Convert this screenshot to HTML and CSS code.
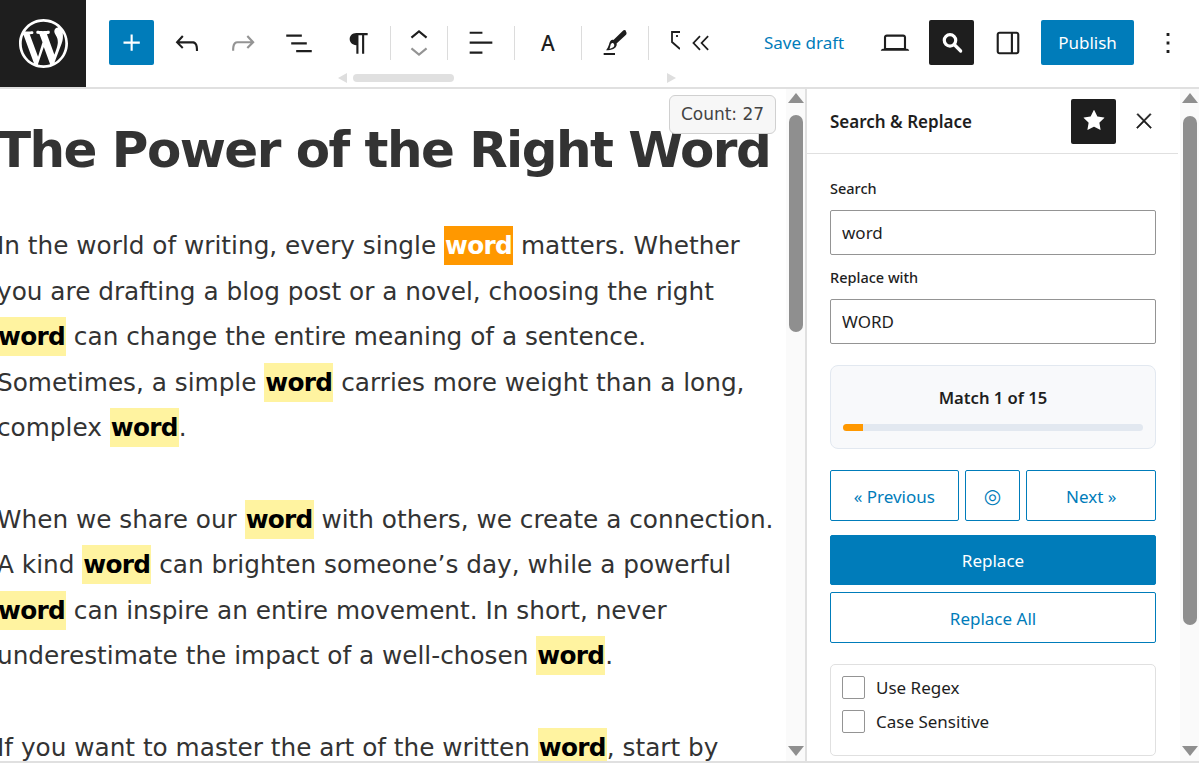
FILE: index.html
```html
<!DOCTYPE html>
<html lang="en">
<head>
    <meta charset="UTF-8" />
    <title>Search &amp; Replace</title>
    <link rel="stylesheet" href="styles.css">
</head>
<body>
    <header class="topbar">
        <a class="logo">
            <svg viewBox="0 0 20 20" width="49" height="49"><path fill="#fff" d="M20 10c0-5.51-4.49-10-10-10C4.48 0 0 4.49 0 10c0 5.52 4.48 10 10 10 5.51 0 10-4.48 10-10zM7.78 15.37L4.37 6.22c.55-.02 1.17-.08 1.17-.08.5-.06.44-1.13-.06-1.11 0 0-1.45.11-2.37.11-.18 0-.37 0-.58-.01C4.12 2.69 6.87 1.11 10 1.11c2.33 0 4.45.87 6.05 2.34-.68-.11-1.65.39-1.65 1.58 0 .74.45 1.36.9 2.1.35.61.55 1.36.55 2.46 0 1.49-1.4 5-1.4 5l-3.03-8.37c.54-.02.82-.17.82-.17.5-.05.44-1.25-.06-1.22 0 0-1.44.12-2.38.12-.87 0-2.33-.12-2.33-.12-.5-.03-.56 1.2-.06 1.22l.92.08 1.26 3.41zM17.41 10c.24-.64.74-1.87.43-4.25.7 1.29 1.05 2.71 1.05 4.25 0 3.29-1.73 6.24-4.4 7.78.97-2.59 1.94-5.2 2.92-7.78zM6.1 18.09C3.12 16.65 1.11 13.53 1.11 10c0-1.3.23-2.48.72-3.59C3.25 10.3 4.67 14.2 6.1 18.09zm4.03-6.63l2.58 6.98c-.86.29-1.76.45-2.71.45-.79 0-1.57-.11-2.29-.33.81-2.38 1.62-4.74 2.42-7.1z"/></svg>
        </a>

        <div class="tools-wrap">
            <div class="tools">
                <button class="tool tool-primary"><svg viewBox="0 0 24 24"><path d="M11 12.5V17.5H12.5V12.5H17.5V11H12.5V6H11V11H6V12.5H11Z"/></svg></button>
                <button class="tool tool-w tool-first"><svg viewBox="0 0 24 24"><path d="M18.3 11.7c-.6-.6-1.4-.9-2.3-.9H6.7l2.9-3.3-1.1-1-4.5 5L8.5 16l1-1-2.7-2.7H16c.5 0 .9.2 1.3.5 1 1 1 3.4 1 4.5v.3h1.5v-.2c0-1.5 0-4.3-1.5-5.7z"/></svg></button>
                <button class="tool tool-w tool-off"><svg viewBox="0 0 24 24"><path d="M15.6 6.5l-1.1 1 2.9 3.3H8c-.9 0-1.7.3-2.3.9-1.4 1.5-1.4 4.2-1.4 5.6v.2h1.5v-.3c0-1.1 0-3.5 1-4.5.3-.3.7-.5 1.3-.5h9.2L14.5 15l1.1 1.1 4.6-4.6-4.6-5z"/></svg></button>
                <button class="tool tool-w"><svg viewBox="0 0 24 24"><path d="M3 6h11v1.5H3V6Zm3.5 5.5h11V13h-11v-1.5ZM21 17H10v1.5h11V17Z"/></svg></button>
                <button class="tool tool-p"><svg viewBox="0 0 24 24"><path d="M18.500 4.500H10C6.900 4.500 5 6.600 5 9s1.900 4.600 5 4.600V20h1.600V6.100h2.700V20h1.600V6.100h2.600z"/></svg></button>
                <span class="sep"></span>
                <div class="tool-stack">
                    <svg viewBox="0 0 24 16"><path d="M6 11.500 12 6.500l6 5-1 1.200L12 8.600l-5 4.100z"/></svg>
                    <svg class="tool-dim" viewBox="0 0 24 16"><path d="M18 4.500 12 9.500l-6-5 1-1.200L12 7.400l5-4.100z"/></svg>
                </div>
                <span class="sep"></span>
                <button class="tool tool-s"><svg viewBox="0 0 24 24"><path d="M13 5.500H4V4h9v1.500Zm7 7H4V11h16v1.500Zm-7 7H4V18h9v1.500Z"/></svg></button>
                <span class="sep"></span>
                <button class="tool tool-s tool-letter">A</button>
                <span class="sep"></span>
                <button class="tool tool-s"><svg viewBox="0 0 24 24"><path d="M4 20.500h8V19H4zM19.700 3.300c-.6-.6-1.500-.6-2.100 0l-6.700 6.500c-.4-.1-.8 0-1.200.1-.6.2-1.300.9-1.700 2.200-.3 1.300-.9 2.800-1.500 3.700l-.8 1.300H7c1.900 0 3.700-.5 4.800-1.500.8-.7 1.300-1.500 1.400-2.400 0-.3 0-.6-.1-.8l6.700-6.300c.5-.6.500-1.600-.100-2.300zM11 14.900c-.7.600-1.700 1-2.900 1.100.4-.8.600-1.700.8-2.700.2-.8.500-1.100.9-1.200.4-.1.800 0 1.200.3.300.3.500.7.500 1.100 0 .5-.2 1-.5 1.400z"/></svg></button>
                <span class="sep"></span>
                <div class="tool-clip"><svg viewBox="0 0 9 24" width="9" height="24"><path fill="none" stroke="#1e1e1e" stroke-width="1.800" d="M9 3H1v10l8 7"/><circle cx="6" cy="7" r="1.100"/></svg></div>
                <button class="tool tool-c"><svg viewBox="0 0 24 24"><path d="M11.500 6 5.800 12l5.700 6 1-1-4.800-5 4.800-5zM18 6l-5.700 6 5.700 6 1-1-4.800-5L19 7z"/></svg></button>
            </div>
            <div class="hscroll">
                <span class="arrow arrow-l"></span>
                <span class="hthumb"></span>
                <span class="arrow arrow-r"></span>
            </div>
        </div>

        <div class="actions">
            <a class="save">Save draft</a>
            <button class="tool tool-view"><svg viewBox="0 0 24 24"><path d="M20.500 16h-.7V8c0-1.100-.9-2-2-2H6.200c-1.100 0-2 .9-2 2v8h-.7c-.8 0-1.500.7-1.500 1.500h20c0-.8-.7-1.500-1.500-1.500zM5.700 8c0-.3.2-.5.5-.5h11.600c.3 0 .5.2.5.5v7.600H5.700V8z"/></svg></button>
            <button class="tool tool-dark tool-find"><svg viewBox="0 0 24 24"><circle cx="10.500" cy="10" r="4.300" fill="none" stroke="#fff" stroke-width="2.400"/><path stroke="#fff" stroke-width="2.400" stroke-linecap="round" d="M14 13.500l4.500 4.500"/></svg></button>
            <button class="tool tool-view tool-panel"><svg viewBox="0 0 24 24"><path d="M18 4H6c-1.100 0-2 .9-2 2v12c0 1.100.9 2 2 2h12c1.100 0 2-.9 2-2V6c0-1.100-.9-2-2-2zm-4 14.500H6c-.3 0-.5-.2-.5-.5V6c0-.3.2-.5.5-.5h8v13zm4.500-.5c0 .3-.2.500-.5.500h-2.500v-13H18c.3 0 .5.2.5.500v12z"/></svg></button>
            <button class="publish">Publish</button>
            <button class="tool tool-more"><svg viewBox="0 0 24 24"><path d="M13 19h-2v-2h2v2zm0-6h-2v-2h2v2zm0-6h-2V5h2v2z"/></svg></button>
        </div>
    </header>

    <main class="layout">
        <section class="editor">
            <div class="count">Count: 27</div>
            <div class="doc">
                <h1>The Power of the Right Word</h1>
                <p>In the world of writing, every single <mark class="now">word</mark> matters. Whether you are drafting a blog post or a novel, choosing the right <mark>word</mark> can change the entire meaning of a sentence. Sometimes, a simple <mark>word</mark> carries more weight than a long, complex <mark>word</mark>.</p>
                <p>When we share our <mark>word</mark> with others, we create a connection. A kind <mark>word</mark> can brighten someone’s day, while a powerful <mark>word</mark> can inspire an entire movement. In short, never underestimate the impact of a well-chosen <mark>word</mark>.</p>
                <p>If you want to master the art of the written <mark>word</mark>, start by</p>
            </div>
            <div class="vscroll">
                <span class="arrow arrow-u"></span>
                <span class="thumb thumb-editor"></span>
                <span class="arrow arrow-d"></span>
            </div>
        </section>

        <aside class="sidebar">
            <div class="panel">
                <div class="panel-head">
                    <h2>Search &amp; Replace</h2>
                    <button class="tool tool-dark"><svg viewBox="0 0 24 24"><path fill="#fff" d="M11.776 4.454a.25.25 0 01.448 0l2.069 4.192a.25.25 0 00.188.137l4.626.672a.25.25 0 01.139.426l-3.348 3.263a.25.25 0 00-.072.222l.79 4.607a.25.25 0 01-.362.263l-4.138-2.175a.25.25 0 00-.232 0l-4.138 2.175a.25.25 0 01-.363-.263l.79-4.607a.25.25 0 00-.071-.222L4.754 9.881a.25.25 0 01.139-.426l4.626-.672a.25.25 0 00.188-.137l2.069-4.192z"/></svg></button>
                    <button class="tool tool-close"><svg viewBox="0 0 24 24"><path d="M13 11.800l6.100-6.300-1-1-6.100 6.200-6.100-6.200-1 1 6.100 6.300-6.500 6.700 1 1 6.500-6.600 6.500 6.600 1-1z"/></svg></button>
                </div>
                <div class="panel-body">
                    <label class="field-label">Search</label>
                    <input class="field" type="text" value="word" />
                    <label class="field-label field-label-2">Replace with</label>
                    <input class="field" type="text" value="WORD" />

                    <div class="match">
                        <div class="match-text">Match 1 of 15</div>
                        <div class="bar"><div class="bar-fill" style="width: 6.67%"></div></div>
                    </div>

                    <div class="nav">
                        <button class="btn btn-prev">« Previous</button>
                        <button class="btn btn-ring">◎</button>
                        <button class="btn btn-next">Next »</button>
                    </div>
                    <button class="btn btn-solid">Replace</button>
                    <button class="btn btn-all">Replace All</button>

                    <div class="options">
                        <label class="option"><input type="checkbox" /><span>Use Regex</span></label>
                        <label class="option"><input type="checkbox" /><span>Case Sensitive</span></label>
                    </div>
                </div>
            </div>
            <div class="vscroll">
                <span class="arrow arrow-u"></span>
                <span class="thumb thumb-side"></span>
                <span class="arrow arrow-d"></span>
            </div>
        </aside>
    </main>
</body>
</html>
```

FILE: styles.css
```css
:root {
    --azul: #007cba;
    --negro: #1e1e1e;
    --linea: #e0e0e0;
    --texto: #333333;
}

* {
    box-sizing: border-box;
}

body {
    margin: 0;
    height: 765px;
    overflow: hidden;
    background: white;
    color: var(--negro);
    font-family: "Noto Sans", sans-serif;
    font-size: 17px;
}

button {
    font-family: inherit;
    cursor: pointer;
}

/* top bar */
.topbar {
    display: flex;
    height: 89px;
    border-bottom: 2px solid var(--linea);
}

.logo {
    width: 86px;
    height: 87px;
    flex: none;
    display: flex;
    align-items: center;
    justify-content: center;
    background: var(--negro);
}

.tools-wrap {
    width: 626px;
    margin-left: 23px;
    flex: none;
    overflow: hidden;
}

.tools {
    display: flex;
    align-items: center;
    height: 65px;
    padding-top: 20px;
}

.tool {
    width: 45px;
    height: 45px;
    padding: 0;
    flex: none;
    display: flex;
    align-items: center;
    justify-content: center;
    border: none;
    border-radius: 2px;
    background: none;
    color: var(--negro);
}

.tool svg {
    width: 34px;
    height: 34px;
    fill: var(--negro);
}

.tool-w {
    width: 56px;
}

.tool-first {
    margin-left: 5px;
}

.tool-primary {
    background: var(--azul);
}

.tool-primary svg {
    fill: white;
}

.tool-off svg {
    fill: #949494;
}

.tool-p {
    width: 63px;
}

.tool-p svg {
    width: 32px;
    height: 32px;
}

.tool-s {
    width: 66px;
}

.tool-c {
    width: 30px;
    margin-left: 5px;
}

.tool-letter {
    font-size: 21px;
    font-weight: 500;
}

.tool-clip {
    width: 9px;
    height: 24px;
    margin: -4px 0 0 22px;
    flex: none;
}

.tool-stack {
    width: 56px;
    flex: none;
    display: flex;
    flex-direction: column;
    align-items: center;
}

.tool-stack svg {
    width: 34px;
    height: 22px;
    fill: var(--negro);
}

.tool-stack .tool-dim {
    fill: #949494;
}

.sep {
    width: 1px;
    height: 34px;
    flex: none;
    background: #dcdcdc;
}

.hscroll {
    display: flex;
    align-items: center;
    height: 14px;
    margin-top: 6px;
    padding-left: 229px;
}

.hthumb {
    width: 101px;
    height: 8px;
    margin: 0 213px 0 6px;
    border-radius: 4px;
    background: #e0e0e0;
}

.arrow {
    width: 0;
    height: 0;
    flex: none;
    border-style: solid;
    border-color: transparent;
}

.arrow-l {
    border-width: 5px 9px 5px 0;
    border-right-color: #dedede;
}

.arrow-r {
    border-width: 5px 0 5px 9px;
    border-left-color: #dedede;
}

.arrow-u {
    border-width: 0 8px 10px;
    border-bottom-color: #8f8f8f;
}

.arrow-d {
    border-width: 10px 8px 0;
    border-top-color: #8f8f8f;
}

.actions {
    display: flex;
    align-items: center;
    height: 45px;
    margin-top: 20px;
    margin-left: 29px;
}

.save {
    width: 81px;
    color: var(--azul);
    white-space: nowrap;
}

.tool-view {
    width: 56px;
    margin-left: 22px;
    margin-right: 6px;
}

.tool-panel {
    width: 67px;
    margin: 0;
}

.tool-find svg {
    width: 32px;
    height: 32px;
}

.tool-dark {
    background: var(--negro);
}

.publish {
    width: 93px;
    height: 45px;
    border: none;
    border-radius: 2px;
    background: var(--azul);
    color: white;
    font-size: 17px;
}

.tool-more {
    width: 45px;
    margin-left: 11px;
}

/* main area */
.layout {
    display: flex;
    height: 674px;
    border-bottom: 2px solid var(--linea);
}

.editor {
    position: relative;
    width: 807px;
    flex: none;
    display: flex;
    overflow: hidden;
    border-right: 2px solid var(--linea);
}

.count {
    position: absolute;
    top: 6px;
    left: 669px;
    width: 107px;
    height: 39px;
    border: 1px solid #d0d0d0;
    border-radius: 6px;
    background: #f7f7f7;
    color: #444;
    font-family: "DejaVu Sans", sans-serif;
    font-size: 17px;
    line-height: 37px;
    text-align: center;
}

.doc {
    width: 783px;
    margin-left: -3px;
    flex: none;
    color: var(--texto);
    font-family: "DejaVu Sans", sans-serif;
    font-size: 24.75px;
    line-height: 45.6px;
}

.doc h1 {
    margin: 27px 0 39px;
    font-size: 50px;
    line-height: 68px;
    letter-spacing: -1.55px;
    white-space: nowrap;
}

.doc p {
    margin: 0 0 45.6px;
}

mark {
    padding: 5px 1px;
    background: #fff3a0;
    color: black;
    font-weight: bold;
    letter-spacing: -0.7px;
}

mark.now {
    background: #ff9800;
    color: white;
}

.vscroll {
    width: 19px;
    margin-left: 6px;
    padding-top: 4px;
    flex: none;
    display: flex;
    flex-direction: column;
    align-items: center;
    height: 672px;
    background: #fafafa;
}

.thumb {
    width: 14px;
    border-radius: 7px;
    background: #8f8f8f;
    flex: none;
}

.thumb-editor {
    height: 217px;
    margin: 12px 0 auto;
}

.thumb-side {
    height: 509px;
    margin: 13px 0 auto;
}

.arrow-d {
    margin-bottom: 5px;
}

/* sidebar */
.sidebar {
    flex: 1;
    display: flex;
    overflow: hidden;
}

.sidebar .vscroll {
    margin-left: 2px;
}

.panel {
    width: 371px;
    flex: none;
}

.panel-head {
    display: flex;
    align-items: center;
    height: 65px;
    padding: 0 12px 0 23px;
    border-bottom: 1px solid var(--linea);
}

.panel-head h2 {
    margin: 0 auto 0 0;
    font-size: 17px;
    font-weight: 600;
}

.tool-close {
    margin-left: 5px;
}

.tool-close svg {
    width: 24px;
    height: 24px;
}

.tool-close path {
    stroke: var(--negro);
    stroke-width: 0.5;
}

.panel-body {
    padding: 0 22px 0 23px;
}

.field-label {
    display: block;
    height: 20px;
    margin: 24px 0 12px;
    font-size: 14.5px;
    font-weight: 500;
    line-height: 20px;
}

.field-label-2 {
    margin: 12px 0 12px;
}

.field {
    display: block;
    width: 100%;
    height: 45px;
    padding: 0 11px;
    border: 1px solid #949494;
    border-radius: 2px;
    color: var(--negro);
    font-family: inherit;
    font-size: 17px;
}

.match {
    height: 84px;
    margin-top: 21px;
    padding: 21px 12px 0;
    border: 1px solid #e2e8f0;
    border-radius: 8px;
    background: #f8f9fb;
}

.match-text {
    height: 22px;
    font-size: 16.6px;
    font-weight: 600;
    line-height: 22px;
    text-align: center;
}

.bar {
    height: 7px;
    margin-top: 15px;
    border-radius: 4px;
    overflow: hidden;
    background: #e2e8f0;
}

.bar-fill {
    height: 100%;
    background: #ff9800;
}

.nav {
    display: flex;
    gap: 6px;
    margin-top: 21px;
}

.btn {
    display: block;
    height: 51px;
    padding: 1px 0 0;
    border: 1px solid var(--azul);
    border-radius: 2px;
    background: white;
    color: var(--azul);
    font-size: 17px;
    white-space: nowrap;
}

.btn-prev {
    width: 129px;
}

.btn-ring {
    width: 56px;
    padding: 0;
    font-family: "DejaVu Sans", sans-serif;
    font-size: 20px;
}

.btn-next {
    width: 130px;
}

.btn-solid {
    width: 100%;
    height: 50px;
    margin-top: 14px;
    background: var(--azul);
    color: white;
}

.btn-all {
    width: 100%;
    margin-top: 7px;
}

.options {
    height: 92px;
    margin-top: 21px;
    padding: 11px 11px 0;
    border: 1px solid var(--linea);
    border-radius: 5px;
}

.option {
    display: flex;
    align-items: center;
    gap: 11px;
    height: 23px;
    margin-bottom: 11px;
    font-size: 17px;
}

.option input {
    width: 23px;
    height: 23px;
    margin: 0;
    appearance: none;
    border: 1px solid #949494;
    border-radius: 2px;
    background: white;
}
```
